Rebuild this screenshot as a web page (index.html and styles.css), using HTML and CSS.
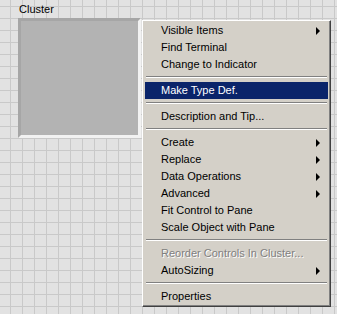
FILE: index.html
```html
<!DOCTYPE html>
<html lang="en">
<head>
  <meta charset="UTF-8">
  <title>Cluster - Shortcut Menu</title>
  <link rel="stylesheet" href="styles.css">
</head>
<body>
  <div class="panel">
    <!-- Cluster control on the front panel -->
    <div class="cluster-label">Cluster</div>
    <div class="cluster-box"></div>

    <!-- Right-click shortcut menu -->
    <ul class="menu">
      <li class="menu-item has-sub">Visible Items</li>
      <li class="menu-item">Find Terminal</li>
      <li class="menu-item">Change to Indicator</li>
      <li class="separator"></li>
      <li class="menu-item selected">Make Type Def.</li>
      <li class="separator"></li>
      <li class="menu-item">Description and Tip...</li>
      <li class="separator"></li>
      <li class="menu-item has-sub">Create</li>
      <li class="menu-item has-sub">Replace</li>
      <li class="menu-item has-sub">Data Operations</li>
      <li class="menu-item has-sub">Advanced</li>
      <li class="menu-item">Fit Control to Pane</li>
      <li class="menu-item">Scale Object with Pane</li>
      <li class="separator"></li>
      <li class="menu-item disabled">Reorder Controls In Cluster...</li>
      <li class="menu-item has-sub">AutoSizing</li>
      <li class="separator"></li>
      <li class="menu-item">Properties</li>
    </ul>
  </div>
</body>
</html>
```

FILE: styles.css
```css
body {
  margin: 0;
  font-family: "Liberation Sans", Arial, sans-serif;
  font-size: 11px;
  color: #000;
}
.panel {
  position: relative;
  width: 337px;
  height: 314px;
  background-color: #e2e2e2;
  background-image:
    linear-gradient(to right, #c9c9c9 1px, transparent 1px),
    linear-gradient(to bottom, #c9c9c9 1px, transparent 1px);
  background-size: 12px 12px;
  background-position: 10px 6px;
  padding: 3px 0 0 19px;
  box-sizing: border-box;
  overflow: hidden;
}
.cluster-label {
  line-height: 13px;
  height: 15px;
}
.cluster-box {
  margin-left: -1px;
  width: 117px;
  height: 114px;
  background: #b3b3b3;
  border-style: solid;
  border-width: 3px;
  border-color: #a6a6a6 #f2f2f2 #f2f2f2 #a6a6a6;
}
.menu {
  position: absolute;
  left: 142px;
  top: 20px;
  width: 189px;
  margin: 0;
  padding: 1px 2px;
  list-style: none;
  box-sizing: border-box;
  background: #d4d0c8;
  border: 1px solid;
  border-color: #fff #404040 #404040 #fff;
  box-shadow: inset -1px -1px #808080;
}
.menu-item {
  position: relative;
  height: 17px;
  line-height: 17px;
  padding-left: 16px;
  white-space: nowrap;
}
.menu-item.selected {
  background: #0a246a;
  color: #fff;
}
.menu-item.disabled {
  color: #808080;
  text-shadow: 1px 1px 0 #fff;
}
.has-sub::after {
  content: "";
  position: absolute;
  right: 8px;
  top: 5px;
  border-left: 4px solid #000;
  border-top: 4px solid transparent;
  border-bottom: 4px solid transparent;
}
.separator {
  height: 9px;
  margin: 0 1px;
  position: relative;
}
.separator::before {
  content: "";
  position: absolute;
  left: 0;
  right: 0;
  top: 3px;
  border-top: 1px solid #808080;
  border-bottom: 1px solid #fff;
}
```
